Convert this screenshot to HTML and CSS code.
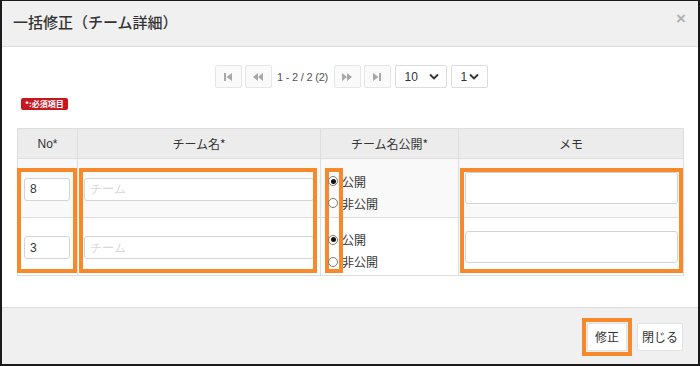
FILE: index.html
```
<!DOCTYPE html>
<html lang="ja">
<head>
<meta charset="utf-8">
<link rel="stylesheet" href="styles.css">
</head>
<body>
<div class="dialog">
  <div class="header">
    <h1 class="title">一括修正（チーム詳細）</h1>
    <span class="close">×</span>
  </div>
  <div class="body">
    <div class="pager">
      <button class="pbtn"><svg width="10" height="10" viewBox="0 0 10 10"><rect x="1" y="1" width="2" height="8" fill="#a8a8a8"/><path d="M9 1 L3.5 5 L9 9 Z" fill="#a8a8a8"/></svg></button>
      <button class="pbtn"><svg width="12" height="10" viewBox="0 0 12 10"><path d="M6 1 L1 5 L6 9 Z M11 1 L6 5 L11 9 Z" fill="#a8a8a8"/></svg></button>
      <span class="pinfo">1 - 2 / 2 (2)</span>
      <button class="pbtn"><svg width="12" height="10" viewBox="0 0 12 10"><path d="M1 1 L6 5 L1 9 Z M6 1 L11 5 L6 9 Z" fill="#a8a8a8"/></svg></button>
      <button class="pbtn"><svg width="10" height="10" viewBox="0 0 10 10"><path d="M1 1 L6.5 5 L1 9 Z" fill="#a8a8a8"/><rect x="7" y="1" width="2" height="8" fill="#a8a8a8"/></svg></button>
      <div class="sel sel-size"><span>10</span><svg width="10" height="7" viewBox="0 0 10 7"><path d="M1 1.5 L5 5.5 L9 1.5" fill="none" stroke="#333" stroke-width="1.8"/></svg></div>
      <div class="sel sel-page"><span>1</span><svg width="10" height="7" viewBox="0 0 10 7"><path d="M1 1.5 L5 5.5 L9 1.5" fill="none" stroke="#333" stroke-width="1.8"/></svg></div>
    </div>
    <div class="badge-row"><span class="badge">*:必須項目</span></div>
    <div class="table-wrap">
      <table class="grid">
        <colgroup>
          <col class="c-no"><col class="c-name"><col class="c-pub"><col class="c-memo">
        </colgroup>
        <thead>
          <tr><th>No*</th><th>チーム名*</th><th>チーム名公開*</th><th>メモ</th></tr>
        </thead>
        <tbody>
          <tr class="odd">
            <td class="td-input"><input class="inp inp-no" value="8"></td>
            <td class="td-input"><input class="inp inp-name" placeholder="チーム"></td>
            <td class="td-radio">
              <label class="radio"><span class="dot on"></span>公開</label>
              <label class="radio"><span class="dot"></span>非公開</label>
            </td>
            <td class="td-memo"><input class="inp inp-memo"></td>
          </tr>
          <tr>
            <td class="td-input"><input class="inp inp-no" value="3"></td>
            <td class="td-input"><input class="inp inp-name" placeholder="チーム"></td>
            <td class="td-radio">
              <label class="radio"><span class="dot on"></span>公開</label>
              <label class="radio"><span class="dot"></span>非公開</label>
            </td>
            <td class="td-memo"><input class="inp inp-memo"></td>
          </tr>
        </tbody>
      </table>
      <div class="hl hl-no"></div>
      <div class="hl hl-name"></div>
      <div class="hl hl-pub"></div>
      <div class="hl hl-memo"></div>
    </div>
  </div>
  <div class="footer">
    <button class="btn btn-mark">修正</button>
    <button class="btn btn-close">閉じる</button>
  </div>
</div>
</body>
</html>
```
FILE: styles.css
```
* { box-sizing: border-box; }
html, body { margin: 0; padding: 0; background: #fff; }
body {
  font-family: "Liberation Sans", "Noto Sans CJK JP", sans-serif;
  font-size: 12px;
  color: #333;
}
.dialog {
  width: 700px;
  height: 366px;
  border: 2px solid #1a1a1a;
  border-top-width: 1px;
  display: flex;
  flex-direction: column;
  background: #fff;
}
.header {
  height: 46px;
  background: #f0f0f0;
  border-bottom: 1px solid #dcdcdc;
  display: flex;
  align-items: center;
  justify-content: space-between;
  padding: 0 12px 4px 11px;
}
.title {
  margin: 0;
  font-family: "Noto Sans CJK JP", sans-serif;
  font-size: 15px;
  font-weight: 500;
  color: #333;
}
.close {
  font-size: 17px;
  font-weight: bold;
  color: #b0b0b0;
  line-height: 1;
  margin-top: -6px;
}
.body {
  height: 260px;
  padding: 18px 15px 0 15px;
}
.pager {
  display: flex;
  justify-content: center;
  align-items: center;
  height: 23px;
  gap: 3px;
  padding-left: 2px;
}
.pbtn {
  width: 27px;
  height: 23px;
  padding: 0;
  border: 1px solid #e6e6e6;
  background: #fafafa;
  display: flex;
  align-items: center;
  justify-content: center;
  border-radius: 2px;
}
.pinfo {
  color: #555;
  font-size: 11px;
  letter-spacing: -0.2px;
  width: 56px;
  text-align: center;
  white-space: nowrap;
}
.sel {
  height: 23px;
  border: 1px solid #dcdcdc;
  border-radius: 2px;
  background: #fff;
  display: flex;
  align-items: center;
  color: #333;
  font-size: 12px;
}
.sel-size { width: 52px; padding-left: 9px; gap: 11px; margin-left: 1px; }
.sel-page { width: 37px; padding-left: 9px; gap: 2px; margin-left: 1px; }
.badge-row {
  margin-top: 10px;
  padding-left: 4px;
  height: 12px;
  display: flex;
}
.badge {
  background: #c8161e;
  color: #fff;
  font-family: "Noto Sans CJK JP", sans-serif;
  font-weight: bold;
  font-size: 8px;
  line-height: 12px;
  height: 12px;
  padding: 0 4px;
  border-radius: 2px;
}
.table-wrap {
  position: relative;
  margin-top: 18px;
  width: 666px;
}
.grid {
  width: 666px;
  border-collapse: collapse;
  table-layout: fixed;
}
.c-no { width: 60px; }
.c-name { width: 243px; }
.c-pub { width: 138px; }
.c-memo { width: 225px; }
.grid th, .grid td {
  border: 1px solid #dedede;
}
.grid th {
  height: 30px;
  background: #ececec;
  font-weight: normal;
  font-size: 12px;
  color: #333;
  text-align: center;
  font-family: "Noto Sans CJK JP", sans-serif;
}
.grid th:first-child { font-family: "Liberation Sans", sans-serif; }
.grid tbody tr { height: 58px; }
.grid tbody tr.odd { height: 59px; background: #f9f9f9; }
.td-input { padding: 2px 6px 0 6px; vertical-align: middle; }
.td-memo { padding: 0 4px 0 6px; vertical-align: middle; }
.td-radio { padding: 8px 0 0 7px; vertical-align: middle; }
.inp {
  display: block;
  height: 23px;
  border: 1px solid #d4d4d4;
  border-radius: 3px;
  background: #fff;
  font-family: "Liberation Sans", sans-serif;
  font-size: 12px;
  color: #333;
  padding: 0 5px;
  outline: none;
}
.inp::placeholder { color: #d6d6d6; }
.inp-no { width: 46px; }
.inp-name { width: 230px; }
.inp-memo { width: 213px; height: 32px; }
.radio {
  display: flex;
  align-items: center;
  height: 22px;
  font-family: "Noto Sans CJK JP", sans-serif;
  font-size: 12px;
  color: #333;
  gap: 4px;
}
.dot {
  position: relative;
  z-index: 2;
  width: 10px;
  height: 10px;
  border: 1px solid #7a7a7a;
  border-radius: 50%;
  background: #fff;
  display: flex;
  align-items: center;
  justify-content: center;
}
.dot.on::after {
  content: "";
  width: 5px;
  height: 5px;
  border-radius: 50%;
  background: #111;
}
.hl {
  position: absolute;
  top: 40px;
  height: 105px;
  border: 4px solid #f7892b;
  pointer-events: none;
  z-index: 1;
}
.hl-no { left: 0; width: 60px; }
.hl-name { left: 62px; width: 238px; }
.hl-pub { left: 308px; width: 18px; }
.hl-memo { left: 443px; width: 223px; }
.footer {
  flex: 1;
  background: #f0f0f0;
  border-top: 1px solid #dcdcdc;
  display: flex;
  justify-content: flex-end;
  align-items: center;
  gap: 10px;
  padding: 1px 15px 0 0;
}
.btn {
  height: 28px;
  background: #fff;
  border: 1px solid #e2e2e2;
  border-radius: 2px;
  font-family: "Noto Sans CJK JP", sans-serif;
  font-size: 12px;
  color: #333;
  padding: 0;
}
.btn-close { width: 46px; }
.btn-mark {
  width: 40px;
  border-radius: 0;
  outline: 4px solid #f7892b;
  outline-offset: 1px;
}
```
